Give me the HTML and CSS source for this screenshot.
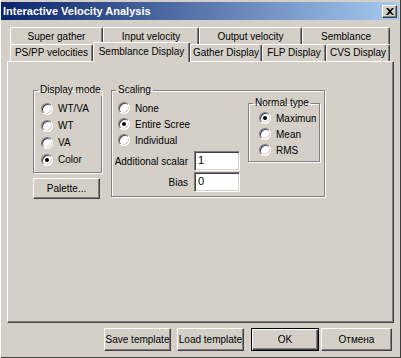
FILE: index.html
```html
<!DOCTYPE html>
<html>
<head>
<meta charset="utf-8">
<link rel="stylesheet" href="styles.css">
</head>
<body>
<div class="window">
  <div class="titlebar">
    <span class="title">Interactive Velocity Analysis</span>
    <span class="close"><svg width="8" height="7" viewBox="0 0 8 7"><path d="M0 0h2l2 2 2-2h2L5 3.5 8 7H6L4 5 2 7H0l3-3.5z" fill="#000"/></svg></span>
  </div>
  <div class="tabs">
    <div class="tabrow back">
      <div class="tab w93">Super gather</div>
      <div class="tab w96">Input velocity</div>
      <div class="tab w103">Output velocity</div>
      <div class="tab w88">Semblance</div>
    </div>
    <div class="tabrow front">
      <div class="tab w83">PS/PP velocities</div>
      <div class="tab w97 selected">Semblance Display</div>
      <div class="tab w72">Gather Display</div>
      <div class="tab w64">FLP Display</div>
      <div class="tab w64">CVS Display</div>
    </div>
  </div>
  <div class="panel">
    <div class="leftcol">
      <fieldset class="group display">
        <legend>Display mode</legend>
        <div class="display-inner">
          <div class="row"><span class="radio"></span><span class="lbl">WT/VA</span></div>
          <div class="row"><span class="radio"></span><span class="lbl">WT</span></div>
          <div class="row"><span class="radio"></span><span class="lbl">VA</span></div>
          <div class="row"><span class="radio checked"></span><span class="lbl">Color</span></div>
        </div>
      </fieldset>
      <div class="btn palette">Palette...</div>
    </div>
    <fieldset class="group scaling">
      <legend>Scaling</legend>
      <div class="scaling-inner">
        <div class="scaling-left">
          <div class="row r16"><span class="radio"></span><span class="lbl">None</span></div>
          <div class="row r16"><span class="radio checked"></span><span class="lbl">Entire Scree</span></div>
          <div class="row r16"><span class="radio"></span><span class="lbl">Individual</span></div>
          <div class="fields">
            <span class="flabel">Additional scalar</span><span class="input">1</span>
            <span class="flabel">Bias</span><span class="input">0</span>
          </div>
        </div>
        <fieldset class="group normal">
          <legend>Normal type</legend>
          <div class="normal-inner">
            <div class="row r16"><span class="radio checked"></span><span class="lbl">Maximum</span></div>
            <div class="row r16"><span class="radio"></span><span class="lbl">Mean</span></div>
            <div class="row r16"><span class="radio"></span><span class="lbl">RMS</span></div>
          </div>
        </fieldset>
      </div>
    </fieldset>
  </div>
  <div class="buttons">
    <div class="btn b-save">Save template</div>
    <div class="btn b-load">Load template</div>
    <div class="btn b-ok default">OK</div>
    <div class="btn b-cancel">Отмена</div>
  </div>
</div>
</body>
</html>
```
FILE: styles.css
```css
* { box-sizing: border-box; }
html, body { margin: 0; padding: 0; }
body {
  font-family: "Liberation Sans", Arial, sans-serif;
  font-size: 10px;
  color: #000;
  background: #d4d0c8;
}
.window {
  width: 401px;
  height: 358px;
  background: #d4d0c8;
  padding-top: 2px;
  display: flex;
  flex-direction: column;
  box-shadow: inset 1px 0 #ffffff, inset -1px -1px #404040;
}
.titlebar {
  height: 18px;
  margin: 0 2px 0 1px;
  background: linear-gradient(to right, #0a246a, #a6caf0);
  display: flex;
  align-items: center;
  justify-content: space-between;
}
.title {
  color: #fff;
  font-weight: bold;
  font-size: 11px;
  padding-left: 2px;
  white-space: nowrap;
}
.close {
  width: 15px;
  height: 13px;
  margin-right: 2px;
  background: #d4d0c8;
  border: 1px solid;
  border-color: #fff #404040 #404040 #fff;
  box-shadow: inset -1px -1px #808080;
  display: flex;
  align-items: center;
  justify-content: center;
}
.tabs {
  margin-top: 7px;
  margin-left: 10px;
  display: flex;
  flex-direction: column;
}
.tabrow {
  display: flex;
  align-items: flex-start;
  height: 17px;
}
.tab {
  height: 17px;
  border-top: 1px solid #fff;
  border-left: 1px solid #fff;
  border-right: 1px solid #404040;
  box-shadow: inset -1px 0 #808080;
  border-radius: 2px 2px 0 0;
  text-align: center;
  line-height: 12px;
  white-space: nowrap;
  background: #d4d0c8;
}
.back .tab { padding-top: 3px; }
.front .tab { padding-top: 2px; }
.tab.selected {
  height: 20px;
  margin-top: -2px;
  padding-top: 3px;
  position: relative;
  z-index: 1;
}
.w93 { width: 93px; }
.w96 { width: 96px; }
.w103 { width: 103px; }
.w88 { width: 88px; }
.w83 { width: 83px; }
.w97 { width: 97px; }
.w72 { width: 72px; }
.w64 { width: 64px; }
.panel {
  margin-left: 7px;
  width: 387px;
  height: 262px;
  border: 1px solid;
  border-color: #fff #404040 #404040 #fff;
  box-shadow: inset -1px -1px #808080;
  padding: 22px 0 0 25px;
  display: flex;
  align-items: flex-start;
}
.leftcol {
  width: 69px;
  display: flex;
  flex-direction: column;
}
.group {
  margin: 0;
  padding: 0;
  border: 1px solid #808080;
  box-shadow: inset 1px 1px #fff, 1px 1px #fff;
  min-width: 0;
}
.group legend {
  margin-left: 4px;
  padding: 0 2px;
  line-height: 12px;
  white-space: nowrap;
}
.display { width: 69px; }
.display-inner { padding: 4px 0 4px 7px; }
.row {
  height: 17px;
  display: flex;
  align-items: center;
  white-space: nowrap;
}
.row.r16 { height: 16px; }
.radio {
  flex: none;
  width: 12px;
  height: 12px;
  border-radius: 50%;
  background: #fff;
  border: 1px solid;
  border-color: #808080 #fff #fff #808080;
  box-shadow: inset 1px 1px #404040, inset -1px -1px #d4d0c8;
  display: flex;
  align-items: center;
  justify-content: center;
}
.radio.checked::after {
  content: "";
  width: 4px;
  height: 4px;
  border-radius: 50%;
  background: #000;
}
.lbl { margin-left: 5px; }
.btn {
  height: 23px;
  background: #d4d0c8;
  border: 1px solid;
  border-color: #fff #404040 #404040 #fff;
  box-shadow: inset -1px -1px #808080;
  display: flex;
  align-items: center;
  justify-content: center;
  white-space: nowrap;
}
.palette {
  width: 67px;
  height: 21px;
  margin-top: 5px;
}
.scaling {
  width: 214px;
  margin-left: 9px;
}
.scaling-inner {
  display: flex;
  align-items: flex-start;
}
.scaling-left {
  width: 128px;
  padding: 4px 0 4px 5px;
}
.scaling-left .radio { margin-left: 1px; }
.fields {
  margin-top: 3px;
  display: grid;
  grid-template-columns: 71px 46px;
  grid-auto-rows: 20px;
  column-gap: 6px;
  row-gap: 1px;
}
.flabel {
  justify-self: end;
  align-self: center;
  white-space: nowrap;
}
.input {
  background: #fff;
  border: 1px solid;
  border-color: #808080 #fff #fff #808080;
  box-shadow: inset 1px 1px #404040, inset -1px -1px #d4d0c8;
  font-size: 11px;
  line-height: 14px;
  padding: 1px 0 0 3px;
}
.normal {
  width: 72px;
  margin-left: 8px;
  margin-top: 1px;
}
.normal-inner {
  padding: 1px 0 3px 10px;
  overflow: hidden;
  margin-right: 3px;
}
.buttons {
  margin-top: 5px;
  display: flex;
  justify-content: flex-end;
  padding-right: 9px;
}
.b-save { width: 67px; }
.b-load { width: 67px; margin-left: 6px; }
.b-ok { width: 68px; margin-left: 7px; }
.b-cancel { width: 71px; margin-left: 2px; }
.btn.default {
  border: 1px solid #000;
  box-shadow: inset 1px 1px #fff, inset -1px -1px #404040, inset -2px -2px #808080;
}
```
